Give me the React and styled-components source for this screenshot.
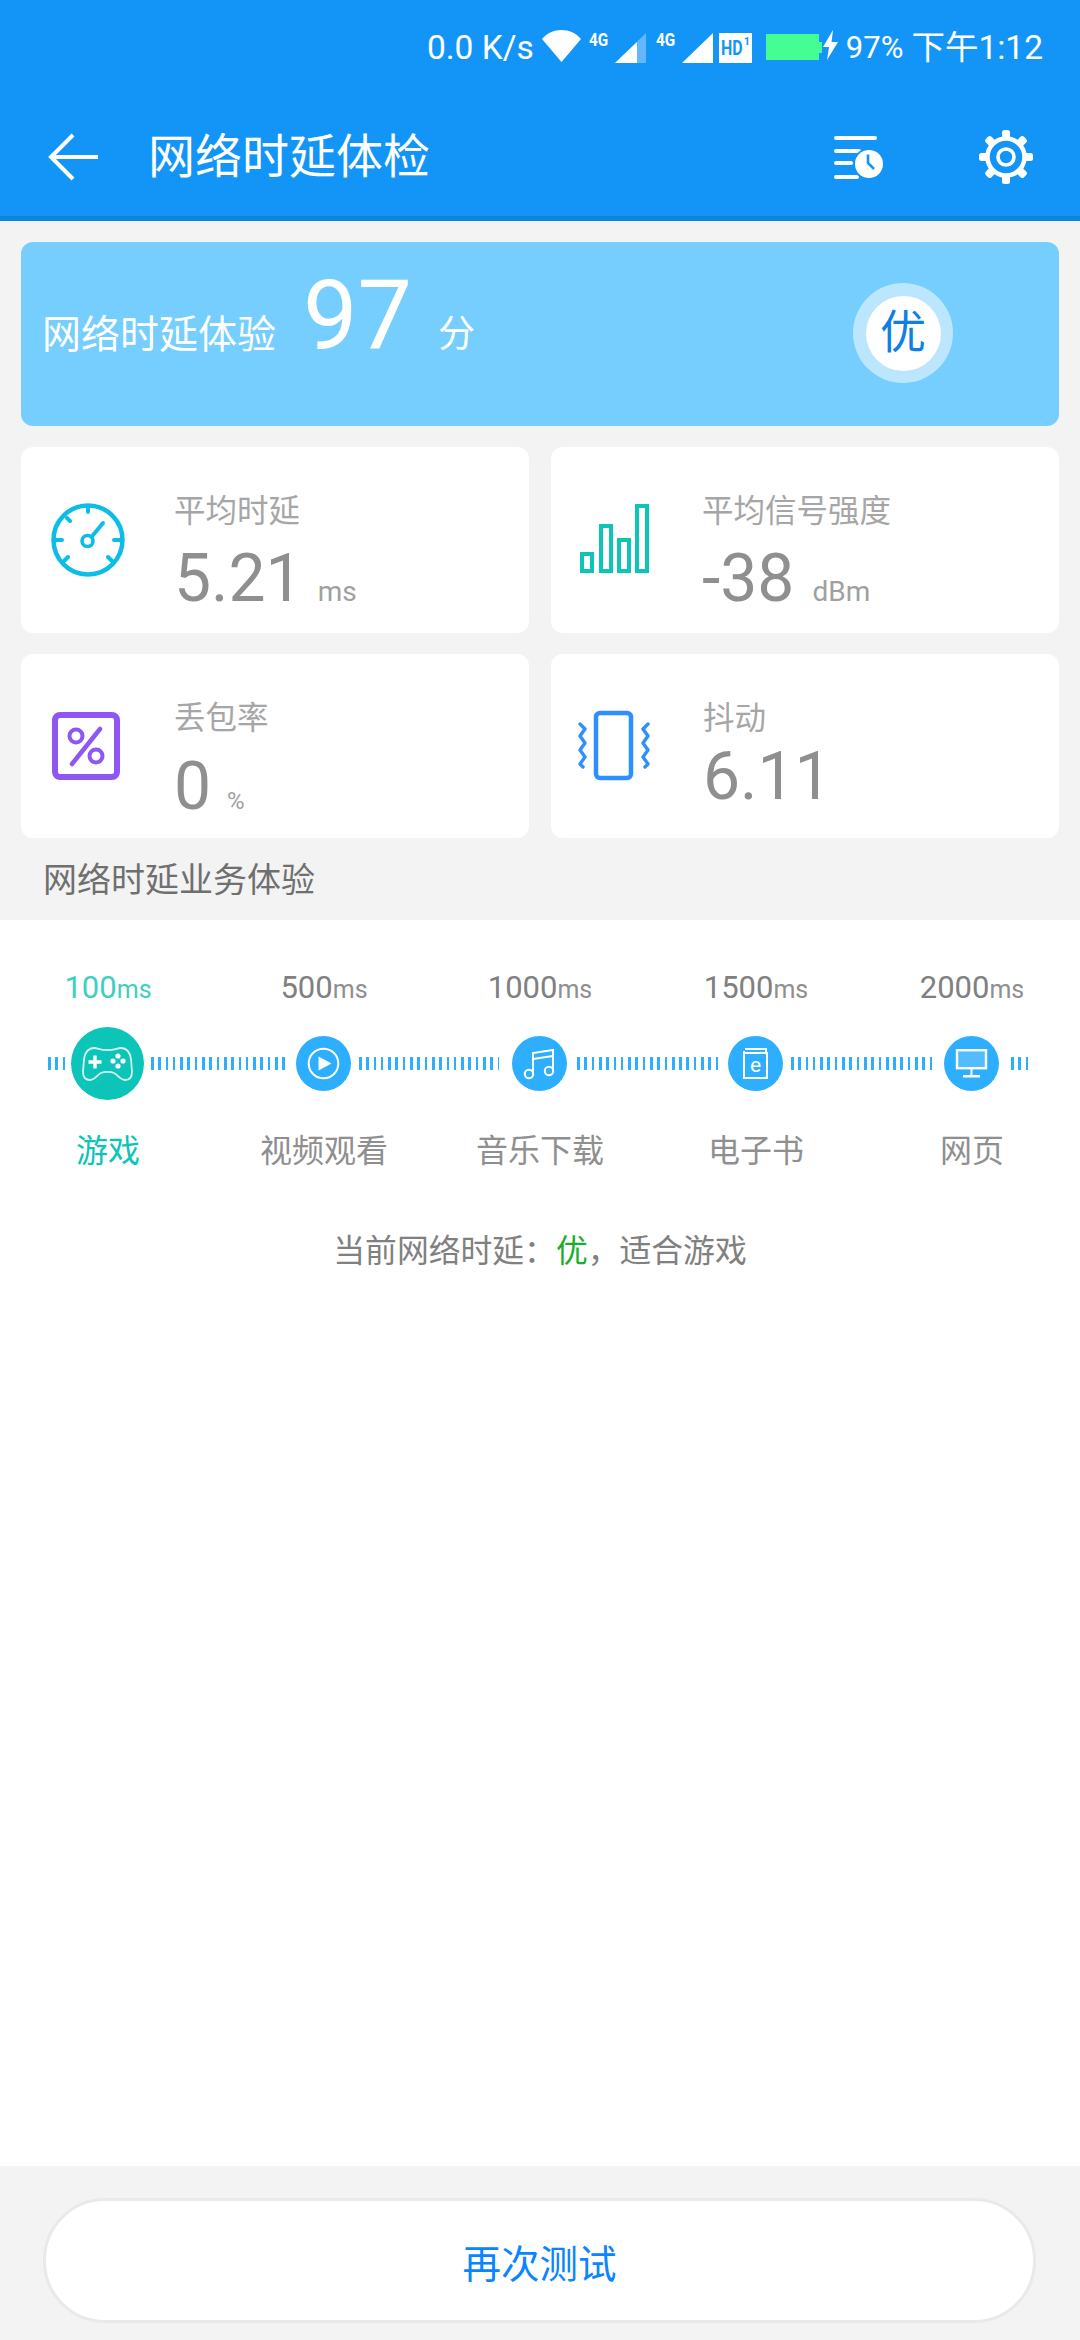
import React from "react";
import styled, { createGlobalStyle } from "styled-components";

const GlobalStyle = createGlobalStyle`
  html, body {
    margin: 0;
    padding: 0;
    background: #f3f3f3;
  }
  * {
    box-sizing: border-box;
  }
`;

const FONT = `Roboto, "Noto Sans CJK SC", sans-serif`;

const Page = styled.div`
  width: 1080px;
  height: 2340px;
  display: flex;
  flex-direction: column;
  overflow: hidden;
  background: #f3f3f3;
  font-family: ${FONT};
`;

const Header = styled.header`
  height: 221px;
  flex: none;
  background: #1395f8;
  border-bottom: 5px solid #0f84dd;
  color: #fff;
`;

const StatusBar = styled.div`
  height: 96px;
  padding: 30px 37px 0 0;
  display: flex;
  justify-content: flex-end;
  align-items: flex-start;
`;

const StatusText = styled.span`
  font-size: ${(p) => p.$size || 33.5}px;
  line-height: 34px;
  margin-top: 1px;
  margin-left: ${(p) => p.$ml || 0}px;
  white-space: nowrap;
`;

const StatusIcon = styled.svg`
  display: block;
  flex: none;
  margin-left: ${(p) => p.$ml || 0}px;
`;

const NetType = styled.span`
  font-size: 18px;
  line-height: 16px;
  font-weight: 700;
  margin-left: ${(p) => p.$ml || 0}px;
  margin-top: 2px;
  width: 20px;
  transform: scaleX(0.85);
  transform-origin: left top;
`;

const HdBox = styled.span`
  width: 33px;
  height: 30px;
  margin: 3px 0 0 6px;
  padding-left: 2px;
  background: #fff;
  color: #1395f8;
  font-size: 21px;
  line-height: 30px;
  font-weight: 700;
  display: flex;
  sup {
    font-size: 11px;
    line-height: 18px;
    margin: 0 0 0 1px;
    vertical-align: baseline;
  }
`;

const HdLetters = styled.span`
  display: inline-block;
  width: 22px;
  transform: scaleX(0.76);
  transform-origin: left center;
`;

const Battery = styled.span`
  width: 53px;
  height: 26px;
  margin: 4px 0 0 14px;
  background: #45fe93;
  position: relative;
  &::after {
    content: "";
    position: absolute;
    right: -3px;
    top: 8px;
    width: 3px;
    height: 11px;
    background: #45fe93;
  }
`;

const Toolbar = styled.div`
  height: 120px;
  display: flex;
  align-items: flex-start;
  padding-left: 48px;
`;

const Title = styled.h1`
  margin: 39px 0 0 50px;
  font-size: 47px;
  line-height: 44px;
  font-weight: 400;
  flex: 1;
`;

const ToolIcon = styled.svg`
  display: block;
  flex: none;
  margin: ${(p) => p.$m};
`;

const Body = styled.main`
  padding: 21px 21px 0;
`;

const ScoreCard = styled.section`
  height: 184px;
  border-radius: 12px;
  background: #75cefd;
  color: #fff;
  display: flex;
  align-items: flex-start;
  padding: 0 106px 0 21px;
`;

const ScoreLabel = styled.span`
  font-size: 39px;
  line-height: 46px;
  margin-top: 70px;
`;

const ScoreValue = styled.span`
  font-size: 97px;
  line-height: 100px;
  margin: 24px 0 0 27px;
`;

const ScoreUnit = styled.span`
  font-size: 37px;
  line-height: 46px;
  margin: 70px 0 0 26px;
  flex: 1;
`;

const GradeBadge = styled.span`
  width: 100px;
  height: 100px;
  margin-top: 41px;
  border-radius: 50%;
  background: #bbe6fe;
  display: flex;
  align-items: center;
  justify-content: center;
  &::before {
    content: attr(data-grade);
    width: 75px;
    height: 75px;
    border-radius: 50%;
    background: #fff;
    color: #0f7fe5;
    font-size: 46px;
    line-height: 72px;
    text-align: center;
  }
`;

const StatGrid = styled.section`
  margin-top: 21px;
  display: grid;
  grid-template-columns: 508px 508px;
  grid-auto-rows: auto;
  column-gap: 22px;
  row-gap: 21px;
`;

const StatCard = styled.div`
  height: ${(p) => p.$h}px;
  border-radius: 12px;
  background: #fff;
  display: flex;
  align-items: flex-start;
  padding-left: ${(p) => p.$pl}px;
`;

const StatIcon = styled.svg`
  display: block;
  flex: none;
  margin-top: ${(p) => p.$mt}px;
`;

const StatText = styled.div`
  margin-left: ${(p) => p.$ml}px;
  padding-top: 46px;
`;

const StatLabel = styled.div`
  font-size: 31.5px;
  line-height: 38px;
  color: #a6a6a6;
`;

const StatValue = styled.div`
  margin-top: ${(p) => p.$mt}px;
  font-size: 66px;
  line-height: 60px;
  color: #8f8f8f;
  white-space: nowrap;
`;

const StatUnit = styled.span`
  margin-left: ${(p) => p.$ml}px;
  font-size: ${(p) => p.$size}px;
  color: #a0a0a0;
`;

const SectionTitle = styled.h2`
  margin: 0;
  height: 82px;
  padding: 22px 0 0 43px;
  font-size: 34px;
  line-height: 40px;
  font-weight: 400;
  color: #6f6f6f;
`;

const Panel = styled.section`
  flex: 1;
  background: #fff;
  padding-top: 50px;
`;

const FiveCols = styled.div`
  display: grid;
  grid-template-columns: repeat(5, 216px);
  text-align: center;
`;

const Latency = styled.span`
  font-size: 31px;
  line-height: 36px;
  color: ${(p) => (p.$active ? "#3fcfbe" : "#808080")};
  small {
    font-size: 25px;
    color: ${(p) => (p.$active ? "#3fcfbe" : "#8f8f8f")};
  }
`;

const Track = styled.div`
  height: 73px;
  margin-top: 19px;
  padding-left: 48px;
  display: flex;
  align-items: center;
`;

const Ticks = styled.span`
  flex: none;
  width: ${(p) => p.$w}px;
  height: 13px;
  margin-left: ${(p) => p.$ml}px;
  background: repeating-linear-gradient(
    90deg,
    #2eaeff 0,
    #2eaeff 2.6px,
    transparent 2.6px,
    transparent 7.3px
  );
`;

const Node = styled.span`
  flex: none;
  width: ${(p) => p.$size}px;
  height: ${(p) => p.$size}px;
  margin-left: ${(p) => p.$ml}px;
  border-radius: 50%;
  background: ${(p) => (p.$active ? "#0cc4b8" : "#2eaeff")};
  display: flex;
  align-items: center;
  justify-content: center;
`;

const NodeIcon = styled.svg`
  display: block;
`;

const ServiceName = styled.span`
  margin-top: 31px;
  font-size: 32px;
  line-height: 40px;
  color: ${(p) => (p.$active ? "#0cc4b8" : "#8f8f8f")};
`;

const Verdict = styled.p`
  margin: 60px 0 0;
  text-align: center;
  font-size: 31.8px;
  line-height: 40px;
  color: #808080;
  em {
    font-style: normal;
    color: #1aae2e;
  }
`;

const Footer = styled.footer`
  height: 174px;
  flex: none;
  padding: 32px 44px 0 43px;
`;

const RetestButton = styled.button`
  display: block;
  width: 100%;
  height: 125px;
  border: 3px solid #e9e9e9;
  border-radius: 62px;
  background: #fff;
  color: #0a84ff;
  font-family: ${FONT};
  font-size: 38.5px;
`;

const SERVICES = [
  { ms: "100", name: "游戏", active: true },
  { ms: "500", name: "视频观看" },
  { ms: "1000", name: "音乐下载" },
  { ms: "1500", name: "电子书" },
  { ms: "2000", name: "网页" },
];

const Wifi = () => (
  <StatusIcon width="39" height="32" viewBox="0 0 39 32" $ml={8}>
    <path d="M0 9C5 3 12 0 19.5 0S34 3 39 9L19.5 32Z" fill="#fff" />
  </StatusIcon>
);

const Signal = ({ weak, ml }) => (
  <StatusIcon width="31" height="34" viewBox="0 0 31 34" $ml={ml}>
    <path d="M31 3V33H0Z" fill={weak ? "#63b7fb" : "#fff"} />
    {weak && <path d="M22 12V33H0Z" fill="#fff" />}
  </StatusIcon>
);

const Bolt = () => (
  <StatusIcon width="15" height="30" viewBox="0 0 15 30" $ml={4}>
    <path d="M10 0 0 17H6L4 30 15 12H8.5Z" fill="#fff" />
  </StatusIcon>
);

const BackArrow = () => (
  <ToolIcon width="50" height="48" viewBox="0 0 50 48" $m="37px 0 0 0" fill="none" stroke="#fff" strokeWidth="4">
    <path d="M50 24H3M25 2 3 24l22 22" />
  </ToolIcon>
);

const HistoryIcon = () => (
  <ToolIcon width="50" height="44" viewBox="0 0 50 44" $m="40px 0 0 0">
    <g fill="none" stroke="#fff" strokeWidth="4" strokeLinecap="round">
      <path d="M3 2H42M3 15H26M3 27H18M3 41H24" />
    </g>
    <circle cx="36" cy="28" r="16" fill="#1395f8" />
    <circle cx="36" cy="28" r="14" fill="#fff" />
    <path d="M35 18.5V27L41 33" fill="none" stroke="#1395f8" strokeWidth="2.6" />
  </ToolIcon>
);

const GearIcon = () => (
  <ToolIcon width="54" height="54" viewBox="0 0 54 54" $m="34px 47px 0 96px">
    <g fill="#fff">
      {[0, 45, 90, 135, 180, 225, 270, 315].map((deg) => (
        <rect key={deg} x="23" y="0" width="8" height="12" rx="2.5" transform={`rotate(${deg} 27 27)`} />
      ))}
    </g>
    <circle cx="27" cy="27" r="18.5" fill="#1395f8" stroke="#fff" strokeWidth="4.5" />
    <circle cx="27" cy="27" r="8" fill="none" stroke="#fff" strokeWidth="3.6" />
  </ToolIcon>
);

const GaugeIcon = () => (
  <StatIcon width="76" height="76" viewBox="0 0 76 76" $mt={55} fill="none" stroke="#0dbde6" strokeWidth="4.5" strokeLinecap="round">
    <circle cx="38" cy="38" r="34.5" />
    <path d="M38 5V10M6 38H12M64 38H70M17 16l3 3M14 59l4-4M58 55l4 4" strokeWidth="4" />
    <circle cx="37.5" cy="39" r="5.5" strokeWidth="3.6" />
    <path d="M41.5 35 53 21" strokeWidth="4" />
  </StatIcon>
);

const BarsIcon = () => (
  <StatIcon width="69" height="69" viewBox="0 0 69 69" $mt={57} fill="none" stroke="#0cc4b8" strokeWidth="4">
    <rect x="2" y="50" width="10" height="17" />
    <rect x="21" y="22" width="10" height="45" />
    <rect x="39" y="36" width="10" height="31" />
    <rect x="57" y="2" width="10" height="65" />
  </StatIcon>
);

const PercentIcon = () => (
  <StatIcon width="68" height="68" viewBox="0 0 68 68" $mt={58}>
    <rect x="3" y="3" width="62" height="62" rx="5" fill="none" stroke="#8e56f4" strokeWidth="6" />
    <g fill="none" stroke="#8e56f4" strokeWidth="4">
      <circle cx="24" cy="24" r="6.5" />
      <circle cx="44" cy="44" r="6.5" />
      <path d="M48 17 20 52" strokeLinecap="round" strokeWidth="4.5" />
    </g>
  </StatIcon>
);

const VibrateIcon = () => (
  <StatIcon width="74" height="72" viewBox="0 0 74 72" $mt={56} fill="none" stroke="#2e90ff" strokeWidth="4">
    <rect x="19" y="3" width="35" height="65" rx="4" strokeWidth="4.5" />
    <g strokeWidth="3.4" strokeLinecap="round" strokeLinejoin="round">
      <path d="M3 14 8 19 3 26 8 33 3 40 8 47 3 54 6 57" />
      <path d="M71 14 66 19 71 26 66 33 71 40 66 47 71 54 68 57" />
    </g>
  </StatIcon>
);

const GamepadGlyph = () => (
  <NodeIcon width="51" height="34" viewBox="0 0 51 34" fill="none" stroke="#d6f6f3" strokeWidth="1.8">
    <path d="M12 1C16 1 18 3 25.5 3 33 3 35 1 39 1 46 1 48 6 49 12L50 25C50 31 47 33 43 33 38 33 36 28 32 26 29 24.5 22 24.5 19 26 15 28 13 33 8 33 4 33 1 31 1 25L2 12C3 6 5 1 12 1Z" />
    <path d="M13 8.5V21.5M6.5 15H19.5" stroke="#fff" strokeWidth="3.4" />
    <g fill="#fff" stroke="none">
      <circle cx="36" cy="9" r="2.6" />
      <circle cx="36" cy="19" r="2.6" />
      <circle cx="31" cy="14" r="2.6" />
      <circle cx="41" cy="14" r="2.6" />
    </g>
  </NodeIcon>
);

const PlayGlyph = () => (
  <NodeIcon width="33" height="33" viewBox="0 0 33 33">
    <circle cx="16.5" cy="16.5" r="14.8" fill="none" stroke="#fff" strokeWidth="2" />
    <path d="M11.5 9.5 24.5 16.5 11.5 23.5Z" fill="#fff" />
  </NodeIcon>
);

const MusicGlyph = () => (
  <NodeIcon width="33" height="33" viewBox="0 0 33 33" fill="none" stroke="#fff" strokeWidth="2">
    <circle cx="6" cy="27" r="4.2" />
    <circle cx="26" cy="24" r="4.2" />
    <path d="M10 27V6L30 3V24" />
    <path d="M10 12 30 9" />
  </NodeIcon>
);

const BookGlyph = () => (
  <NodeIcon width="25" height="31" viewBox="0 0 25 31">
    <path d="M1 3V30H24V5H1M2 1H23V5" fill="none" stroke="#fff" strokeWidth="2" />
    <text x="12.5" y="24" textAnchor="middle" fontSize="21" fontFamily="Roboto, sans-serif" fill="#fff">e</text>
  </NodeIcon>
);

const MonitorGlyph = () => (
  <NodeIcon width="33" height="29" viewBox="0 0 33 29">
    <rect x="2" y="1.2" width="29" height="18" fill="#fff" fillOpacity="0.18" stroke="#fff" strokeWidth="2.4" />
    <path d="M15.5 20H17.5V26H15.5ZM8 26H25V28.4H8Z" fill="#fff" />
  </NodeIcon>
);

export default function App() {
  return (
    <Page>
      <GlobalStyle />
      <Header>
        <StatusBar>
          <StatusText>0.0 K/s</StatusText>
          <Wifi />
          <NetType $ml={8}>4G</NetType>
          <Signal weak ml={6} />
          <NetType $ml={10}>4G</NetType>
          <Signal ml={6} />
          <HdBox>
            <HdLetters>HD</HdLetters>
            <sup>1</sup>
          </HdBox>
          <Battery />
          <Bolt />
          <StatusText $size={31} $ml={8}>97%</StatusText>
          <StatusText $ml={8}>下午1:12</StatusText>
        </StatusBar>
        <Toolbar>
          <BackArrow />
          <Title>网络时延体检</Title>
          <HistoryIcon />
          <GearIcon />
        </Toolbar>
      </Header>

      <Body>
        <ScoreCard>
          <ScoreLabel>网络时延体验</ScoreLabel>
          <ScoreValue>97</ScoreValue>
          <ScoreUnit>分</ScoreUnit>
          <GradeBadge data-grade="优" />
        </ScoreCard>

        <StatGrid>
          <StatCard $h={186} $pl={29}>
            <GaugeIcon />
            <StatText $ml={48}>
              <StatLabel>平均时延</StatLabel>
              <StatValue $mt={18}>
                5.21<StatUnit $ml={15} $size={28}>ms</StatUnit>
              </StatValue>
            </StatText>
          </StatCard>
          <StatCard $h={186} $pl={29}>
            <BarsIcon />
            <StatText $ml={53}>
              <StatLabel>平均信号强度</StatLabel>
              <StatValue $mt={18}>
                -38<StatUnit $ml={18} $size={28}>dBm</StatUnit>
              </StatValue>
            </StatText>
          </StatCard>
          <StatCard $h={184} $pl={31}>
            <PercentIcon />
            <StatText $ml={54}>
              <StatLabel>丢包率</StatLabel>
              <StatValue $mt={19}>
                0<StatUnit $ml={16} $size={24}>%</StatUnit>
              </StatValue>
            </StatText>
          </StatCard>
          <StatCard $h={184} $pl={26}>
            <VibrateIcon />
            <StatText $ml={52}>
              <StatLabel>抖动</StatLabel>
              <StatValue $mt={9}>6.11</StatValue>
            </StatText>
          </StatCard>
        </StatGrid>
      </Body>

      <SectionTitle>网络时延业务体验</SectionTitle>

      <Panel>
        <FiveCols>
          {SERVICES.map((s) => (
            <Latency key={s.ms} $active={s.active}>
              {s.ms}
              <small>ms</small>
            </Latency>
          ))}
        </FiveCols>

        <Track>
          <Ticks $w={17} $ml={0} />
          <Node $size={73} $ml={6} $active>
            <GamepadGlyph />
          </Node>
          <Ticks $w={135} $ml={7} />
          <Node $size={55} $ml={10}>
            <PlayGlyph />
          </Node>
          <Ticks $w={140} $ml={8} />
          <Node $size={55} $ml={13}>
            <MusicGlyph />
          </Node>
          <Ticks $w={143} $ml={10} />
          <Node $size={55} $ml={8}>
            <BookGlyph />
          </Node>
          <Ticks $w={141} $ml={8} />
          <Node $size={55} $ml={12}>
            <MonitorGlyph />
          </Node>
          <Ticks $w={17} $ml={12} />
        </Track>

        <FiveCols>
          {SERVICES.map((s) => (
            <ServiceName key={s.name} $active={s.active}>
              {s.name}
            </ServiceName>
          ))}
        </FiveCols>

        <Verdict>
          当前网络时延：<em>优</em>，适合游戏
        </Verdict>
      </Panel>

      <Footer>
        <RetestButton>再次测试</RetestButton>
      </Footer>
    </Page>
  );
}
